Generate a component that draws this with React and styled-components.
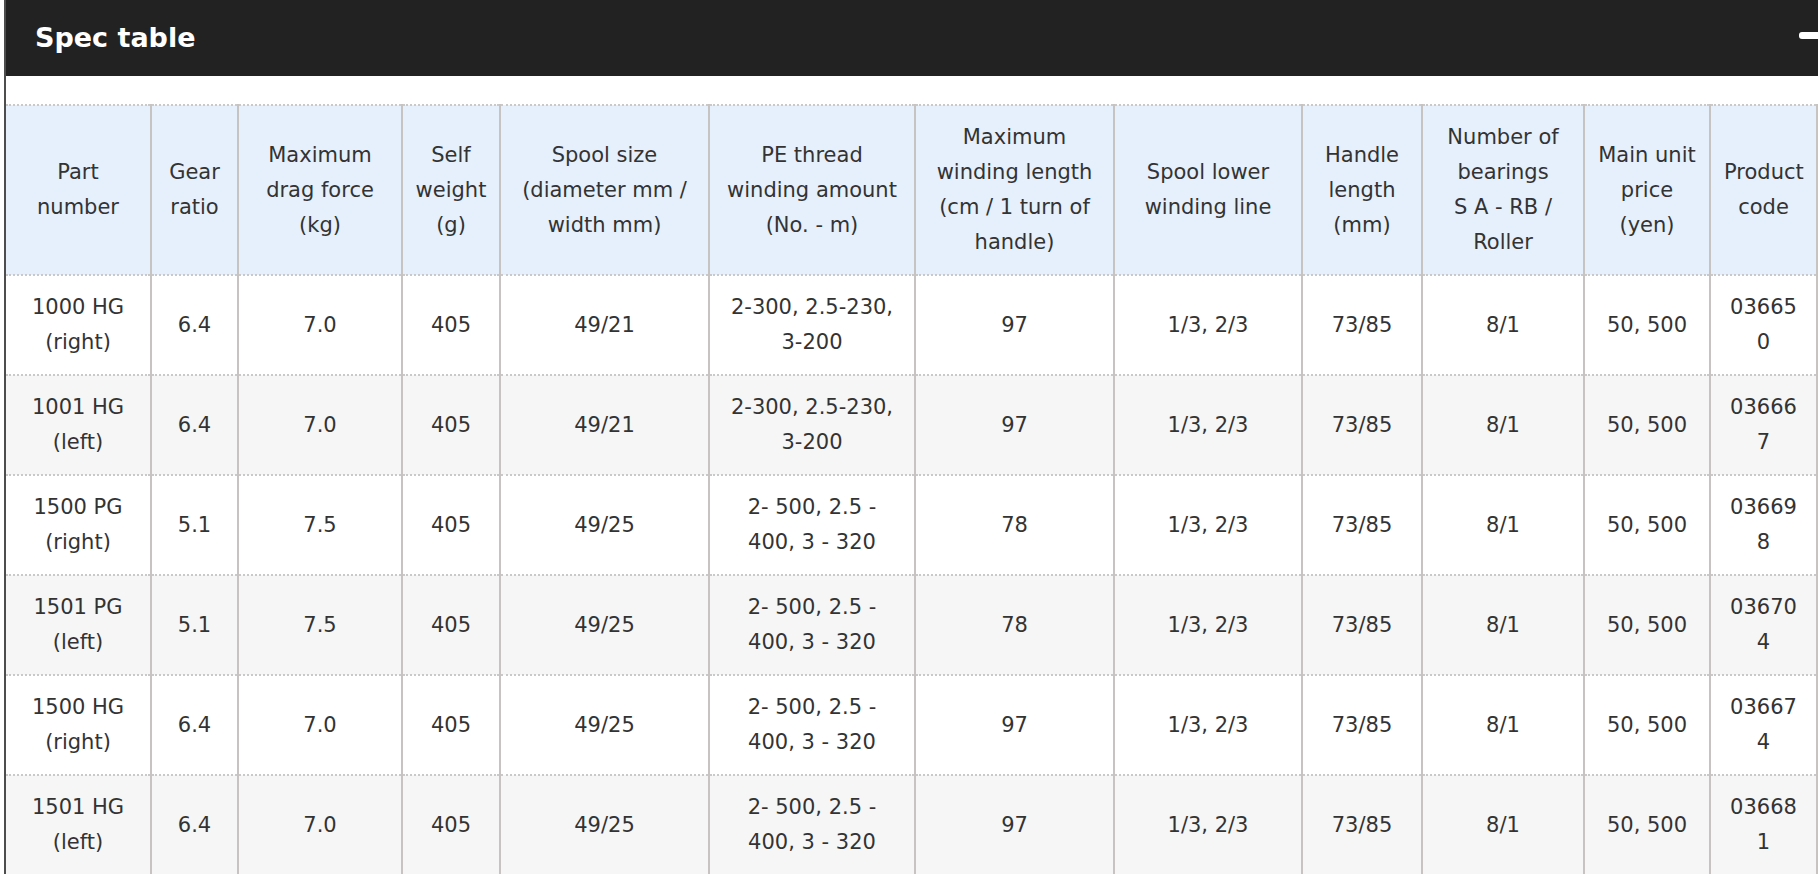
import React from "react";
import styled, { createGlobalStyle } from "styled-components";

const Global = createGlobalStyle`
  html, body {
    margin: 0;
    padding: 0;
    background: #ffffff;
    overflow: hidden;
  }
  body {
    font-family: "DejaVu Sans", "Noto Sans CJK JP", sans-serif;
    color: #333333;
  }
`;

const Page = styled.div`
  margin-left: 4px;
  width: 1841px;
  border-left: 2px solid #4d4d4d;
  background: #ffffff;
`;

const TitleBar = styled.header`
  display: flex;
  justify-content: space-between;
  align-items: flex-start;
  height: 76px;
  padding: 0 20px 0 29px;
  background: #222222;
  box-sizing: border-box;
`;

const Title = styled.h2`
  margin: 0;
  line-height: 76px;
  font-size: 27px;
  font-weight: 700;
  color: #ffffff;
  letter-spacing: 0;
`;

const Minus = styled.span`
  display: block;
  margin-top: 32px;
  width: 28px;
  height: 7px;
  border-radius: 3px;
  background: #ffffff;
`;

const Body = styled.div`
  padding-top: 28px;
`;

const Table = styled.table`
  width: 1811px;
  table-layout: fixed;
  border-collapse: collapse;
  font-size: 21px;
  line-height: 35px;
  color: #333333;
`;

const HeadRow = styled.tr`
  background: #e5f0fc;
`;

const Row = styled.tr`
  background: ${(p) => (p.$alt ? "#f6f6f6" : "#ffffff")};
`;

const Th = styled.th`
  font-weight: 400;
  text-align: center;
  vertical-align: middle;
  padding: 14px ${(p) => (p.$code ? 13 : 12)}px;
  border-top: 2px dotted #c9c9c9;
  border-bottom: 2px dotted #c9c9c9;
  border-left: 2px solid #c6c3c0;
  border-right: 2px solid #c6c3c0;
  &:first-child {
    border-left: none;
  }
`;

const Td = styled.td`
  text-align: center;
  vertical-align: middle;
  padding: 14px ${(p) => (p.$code ? 13 : 12)}px;
  overflow-wrap: anywhere;
  border-top: 2px dotted #c9c9c9;
  border-bottom: 2px dotted #c9c9c9;
  border-left: 2px solid #c6c3c0;
  border-right: 2px solid #c6c3c0;
  &:first-child {
    border-left: none;
  }
`;

const widths = [145, 87, 164, 98, 209, 206, 199, 188, 120, 162, 126, 107];

const headers = [
  "Part number",
  "Gear ratio",
  "Maximum drag force (kg)",
  "Self weight (g)",
  "Spool size (diameter mm / width mm)",
  "PE thread winding amount (No. - m)",
  "Maximum winding length (cm / 1 turn of handle)",
  "Spool lower winding line",
  "Handle length (mm)",
  <>
    Number of bearings
    <br />S A - RB / Roller
  </>,
  "Main unit price (yen)",
  "Product code",
];

const PE_A = "2-300, 2.5-230, 3-200";
const PE_B = "2- 500, 2.5 - 400, 3 - 320";

const rows = [
  ["1000 HG (right)", "6.4", "7.0", "405", "49/21", PE_A, "97", "1/3, 2/3", "73/85", "8/1", "50, 500", "036650"],
  ["1001 HG (left)", "6.4", "7.0", "405", "49/21", PE_A, "97", "1/3, 2/3", "73/85", "8/1", "50, 500", "036667"],
  ["1500 PG (right)", "5.1", "7.5", "405", "49/25", PE_B, "78", "1/3, 2/3", "73/85", "8/1", "50, 500", "036698"],
  ["1501 PG (left)", "5.1", "7.5", "405", "49/25", PE_B, "78", "1/3, 2/3", "73/85", "8/1", "50, 500", "036704"],
  ["1500 HG (right)", "6.4", "7.0", "405", "49/25", PE_B, "97", "1/3, 2/3", "73/85", "8/1", "50, 500", "036674"],
  ["1501 HG (left)", "6.4", "7.0", "405", "49/25", PE_B, "97", "1/3, 2/3", "73/85", "8/1", "50, 500", "036681"],
];

export default function App() {
  const last = widths.length - 1;
  return (
    <>
      <Global />
      <Page>
        <TitleBar>
          <Title>Spec table</Title>
          <Minus aria-label="collapse" />
        </TitleBar>
        <Body>
          <Table>
            <colgroup>
              {widths.map((w, i) => (
                <col key={i} style={{ width: w }} />
              ))}
            </colgroup>
            <thead>
              <HeadRow>
                {headers.map((h, i) => (
                  <Th key={i} $code={i === last}>
                    {h}
                  </Th>
                ))}
              </HeadRow>
            </thead>
            <tbody>
              {rows.map((r, ri) => (
                <Row key={ri} $alt={ri % 2 === 1}>
                  {r.map((c, ci) => (
                    <Td key={ci} $code={ci === last}>
                      {c}
                    </Td>
                  ))}
                </Row>
              ))}
            </tbody>
          </Table>
        </Body>
      </Page>
    </>
  );
}
